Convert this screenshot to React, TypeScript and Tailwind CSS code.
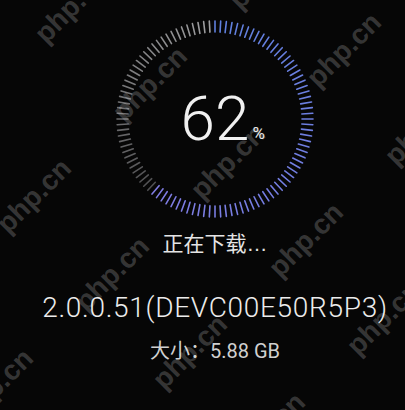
import React from 'react';

const TICKS = 108;
const PROGRESS = 62;

function mix(a: number[], b: number[], t: number) {
  const c = a.map((v, i) => Math.round(v + (b[i] - v) * t));
  return `rgb(${c[0]},${c[1]},${c[2]})`;
}

function Ring() {
  const done = Math.round((TICKS * PROGRESS) / 100);
  const ticks = Array.from({ length: TICKS }, (_, i) => {
    const ang = (i / TICKS) * Math.PI * 2;
    const sin = Math.sin(ang);
    const cos = Math.cos(ang);
    const r1 = 87;
    const r2 = 98;
    let color: string;
    if (i < done) {
      color = mix([96, 128, 222], [128, 124, 226], i / done);
    } else {
      color = mix([80, 80, 82], [160, 160, 162], (i - done) / (TICKS - done));
    }
    return (
      <line
        key={i}
        x1={100 + sin * r1}
        y1={100 - cos * r1}
        x2={100 + sin * r2}
        y2={100 - cos * r2}
        stroke={color}
        strokeWidth={1.6}
        strokeLinecap="round"
      />
    );
  });
  return (
    <svg className="absolute inset-0" width={200} height={200} viewBox="0 0 200 200">
      {ticks}
    </svg>
  );
}

function Watermarks() {
  const marks: { x: number; y: number }[] = [];
  for (let i = -2; i <= 3; i++) {
    for (let j = -4; j <= 4; j++) {
      const x = 228 - 38 * i + 78 * j;
      const y = 162 + 190 * i + 78 * j;
      if (x > -60 && x < 465 && y > -60 && y < 470) marks.push({ x, y });
    }
  }
  return (
    <div className="pointer-events-none absolute inset-0">
      {marks.map((m, k) => (
        <span
          key={k}
          className="absolute text-[28px] font-bold leading-none text-white/20 whitespace-nowrap"
          style={{
            left: m.x,
            top: m.y,
            transform: 'translate(-50%, -50%) rotate(-45deg)',
            fontFamily: '"Liberation Sans", Arial, sans-serif',
          }}
        >
          php.cn
        </span>
      ))}
    </div>
  );
}

export default function App() {
  return (
    <div className="relative w-[405px] h-[410px] overflow-hidden bg-[#060606]">
      <div className="flex flex-col items-center pl-[25px] pt-[19px]">
        <div className="relative w-[200px] h-[200px] flex items-center justify-center">
          <Ring />
          <div className="relative">
            <span className="block text-[62px] font-light leading-none text-[#f0f0f0] font-['Roboto',sans-serif]">
              62
            </span>
            <span className="absolute left-full bottom-[8px] ml-[3px] text-[17px] leading-none text-[#e8e8e8] font-['Roboto',sans-serif]">
              %
            </span>
          </div>
        </div>
        <div className="mt-[14px] text-[21px] leading-none text-[#e4e4e4] font-['Liberation_Sans','Noto_Sans_CJK_SC',sans-serif]">
          正在下载…
        </div>
        <div className="mt-[40px] text-[28px] font-light leading-none tracking-[0.7px] text-[#ececec] whitespace-nowrap font-['Roboto',sans-serif]">
          2.0.0.51(DEVC00E50R5P3)
        </div>
        <div className="mt-[19px] text-[20px] leading-none text-[#d0d0d0] whitespace-nowrap font-['Roboto','Noto_Sans_CJK_SC',sans-serif]">
          大小：5.88 GB
        </div>
      </div>
      <Watermarks />
    </div>
  );
}
